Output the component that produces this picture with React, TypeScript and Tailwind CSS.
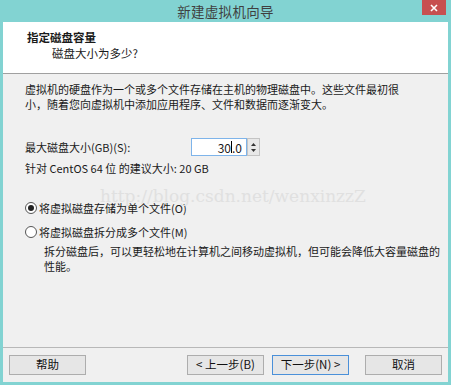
import React from "react";

const font = { fontFamily: '"Segoe UI", "Noto Sans CJK SC", "Noto Sans", sans-serif' };

function Button({ label, primary }: { label: string; primary?: boolean }) {
  return (
    <button
      className={
        "w-[77px] h-[20px] text-[11.5px] text-[#111] leading-none bg-[#e6e6e6] border " +
        (primary ? "border-[#4a90d9]" : "border-[#adadad]")
      }
    >
      {label}
    </button>
  );
}

function Radio({ checked, label }: { checked?: boolean; label: string }) {
  return (
    <div className="flex items-center gap-[2px] h-[14px]">
      <span className="w-[12px] h-[12px] rounded-full border border-[#555] bg-white flex items-center justify-center">
        {checked && <span className="w-[6px] h-[6px] rounded-full bg-[#222]" />}
      </span>
      <span>{label}</span>
    </div>
  );
}

export default function App() {
  return (
    <div
      className="w-[451px] h-[385px] bg-[#82d3d2] flex flex-col text-[11px] text-[#1a1a1a] overflow-hidden"
      style={font}
    >
      <div className="h-[22px] relative flex items-center justify-center">
        <span className="text-[13.5px] text-[#3f3f3f] tracking-[0.3px]">新建虚拟机向导</span>
        <div className="absolute right-[5px] top-0 w-[24px] h-[15px] bg-[#c75050] flex items-center justify-center">
          <svg width="8" height="8" viewBox="0 0 8 8">
            <path d="M1 1 L7 7 M7 1 L1 7" stroke="white" strokeWidth="1.6" />
          </svg>
        </div>
      </div>

      <div className="flex-1 mx-[3px] mb-[3px] flex flex-col bg-[#f0f0f0]">
        <div className="h-[52px] bg-white pl-[24px] pt-[8px] border-b border-[#a0a0a0] leading-[15px]">
          <div className="font-bold text-[11.5px]">指定磁盘容量</div>
          <div className="pl-[25px] mt-[1px] text-[11.5px]">磁盘大小为多少?</div>
        </div>

        <div className="flex-1 pl-[22px] pt-[8px] leading-[15px] relative">
          <p className="w-[378px]">
            虚拟机的硬盘作为一个或多个文件存储在主机的物理磁盘中。这些文件最初很小，随着您向虚拟机中添加应用程序、文件和数据而逐渐变大。
          </p>

          <div className="flex items-center mt-[26px] h-[18px]">
            <span className="w-[166px]">最大磁盘大小(GB)(S):</span>
            <div className="w-[56px] h-[18px] bg-white border border-[#7eb4ea] flex items-center justify-end pr-[4px] text-[12px]">
              <span>30</span>
              <span className="w-px h-[12px] bg-black" />
              <span>.0</span>
            </div>
            <div className="w-[13px] h-[18px] bg-[#e8e8e8] border border-[#c4c4c4] flex flex-col items-center justify-center gap-[3px]">
              <svg width="5" height="3" viewBox="0 0 5 3">
                <path d="M0 3 L2.5 0 L5 3 Z" fill="#333" />
              </svg>
              <svg width="5" height="3" viewBox="0 0 5 3">
                <path d="M0 0 L2.5 3 L5 0 Z" fill="#333" />
              </svg>
            </div>
          </div>

          <div className="mt-[5px]">针对 CentOS 64 位 的建议大小: 20 GB</div>

          <div className="mt-[25px] flex flex-col gap-[10px]">
            <Radio checked label="将虚拟磁盘存储为单个文件(O)" />
            <Radio label="将虚拟磁盘拆分成多个文件(M)" />
          </div>
          <p className="pl-[19px] mt-[5px] w-[419px]">
            拆分磁盘后，可以更轻松地在计算机之间移动虚拟机，但可能会降低大容量磁盘的性能。
          </p>

          <div
            className="absolute left-[97px] top-[115px] text-[17px] text-[#e0e0e0] pointer-events-none"
            style={{ fontFamily: '"DejaVu Serif", serif' }}
          >
            http://blog.csdn.net/wenxinzzZ
          </div>
        </div>

        <div className="h-[35px] border-t border-[#b8b8b8] flex items-center px-[6px]">
          <Button label="帮助" />
          <div className="flex-1" />
          <div className="flex gap-[8px]">
            <Button label="< 上一步(B)" />
            <Button label="下一步(N) >" primary />
            <div className="w-0" />
            <Button label="取消" />
          </div>
        </div>
      </div>
    </div>
  );
}
